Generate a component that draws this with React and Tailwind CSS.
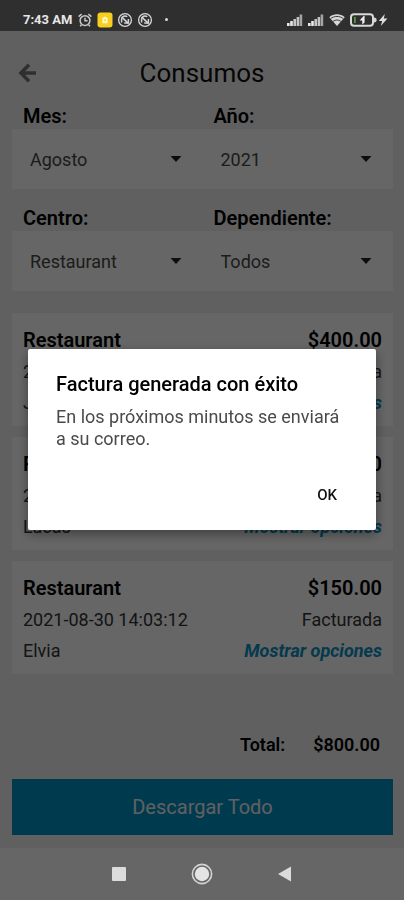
const FILTERS = [
  [
    { id: 'mes', label: 'Mes:', value: 'Agosto' },
    { id: 'anio', label: 'Año:', value: '2021' },
  ],
  [
    { id: 'centro', label: 'Centro:', value: 'Restaurant' },
    { id: 'dependiente', label: 'Dependiente:', value: 'Todos' },
  ],
]

const CONSUMOS = [
  { id: 1, centro: 'Restaurant', monto: '$400.00', fecha: '2021-08-30 14:03:12', estado: 'Facturada', nombre: 'Juan' },
  { id: 2, centro: 'Restaurant', monto: '$250.00', fecha: '2021-08-30 14:03:12', estado: 'Facturada', nombre: 'Lucas' },
  { id: 3, centro: 'Restaurant', monto: '$150.00', fecha: '2021-08-30 14:03:12', estado: 'Facturada', nombre: 'Elvia' },
]

function MutedIcon() {
  return (
    <svg className="h-4 w-4" viewBox="0 0 16 16" fill="none" stroke="#d6d6d6">
      <circle cx="8" cy="8" r="6.4" strokeWidth="1.3" />
      <path d="M4.6 10.4V7.2a3.4 3.4 0 0 1 5.6-2.4M11.4 7v4H7.2" strokeWidth="1.5" />
      <path d="M4.6 5l6.8 6.4" strokeWidth="1.6" />
    </svg>
  )
}

function SignalIcon() {
  return (
    <svg className="h-3 w-4" viewBox="0 0 16 12" fill="#c4c4c4">
      <rect x="0" y="9" width="2.6" height="3" fill="#e8e8e8" />
      <rect x="3.2" y="7" width="2.6" height="5" fill="#e8e8e8" />
      <rect x="6.4" y="5" width="2.6" height="7" />
      <rect x="9.6" y="3" width="2.6" height="9" />
      <rect x="12.6" y="0.5" width="2.6" height="11.5" fill="#a4a4a4" />
    </svg>
  )
}

function StatusBar() {
  return (
    <div className="relative z-20 flex h-[31px] items-center justify-between bg-[#2f2f2f] pt-2 pr-4 pl-[23px] text-[#e6e6e6]">
      <div className="flex items-center gap-1">
        <span className="mr-px text-[13px] font-bold">7:43 AM</span>
        <svg className="h-4 w-4" viewBox="0 0 16 16" fill="none" stroke="#c8c8c8" strokeWidth="1.5">
          <circle cx="8" cy="8.6" r="4.9" />
          <path d="M8 5.8v3h2.6M1.6 4.6l3-2.5M14.4 4.6l-3-2.5M4.4 12.8l-1.3 1.5M11.6 12.8l1.3 1.5" />
        </svg>
        <svg className="h-4 w-4" viewBox="0 0 16 16">
          <rect x="0.5" y="0.5" width="15" height="15" rx="3" fill="#f8cf1c" />
          <path d="M8 4.2l1 1.3h1.6v5.7H5.4V5.5H7z" fill="#fff8d0" />
          <path d="M8 7v2.4" stroke="#f8cf1c" strokeWidth="1.2" />
        </svg>
        <MutedIcon />
        <MutedIcon />
        <span className="ml-2 h-[3px] w-[3px] rounded-full bg-[#dcdcdc]" />
      </div>
      <div className="flex items-center gap-[5px]">
        <SignalIcon />
        <SignalIcon />
        <svg className="h-3 w-4" viewBox="0 0 16 12">
          <path d="M8 12L0.3 3.2C4.6-.6 11.4-.6 15.7 3.2z" fill="#d8d8d8" />
          <path d="M1.6 4.7c3.7-3 9.1-3 12.8 0M4 7.4c2.3-1.9 5.7-1.9 8 0" fill="none" stroke="#2f2f2f" strokeWidth="0.9" />
        </svg>
        <svg className="h-[14px] w-[27px]" viewBox="0 0 27 14">
          <rect x="1" y="1.2" width="22" height="11.6" rx="3" fill="none" stroke="#d8d8d8" strokeWidth="2" />
          <path d="M24 4.5c2 .3 2.6 1.2 2.6 2.5s-.6 2.2-2.6 2.5z" fill="#d8d8d8" />
          <rect x="4" y="4" width="1.8" height="6" fill="#4c9a3e" />
          <path d="M13.8 2.8L9.6 7.6h2.6v3.8l2.4-2V2.8z" fill="#ededed" />
        </svg>
        <svg className="-ml-1 h-3 w-[10px]" viewBox="0 0 10 12">
          <path d="M6.8 0L0.8 7h3.4L2.8 12 9.4 4.6H5.8z" fill="#dedede" />
        </svg>
      </div>
    </div>
  )
}

function FilterRow({ filters }) {
  return (
    <div>
      <div className="grid grid-cols-2">
        {filters.map((f) => (
          <label key={f.id} htmlFor={f.id} className="pl-[11px] text-[20px] leading-[26px] font-semibold text-black">
            {f.label}
          </label>
        ))}
      </div>
      <div className="grid grid-cols-2 bg-white">
        {filters.map((f) => (
          <div key={f.id} className="relative">
            <select
              id={f.id}
              defaultValue={f.value}
              className="h-[60px] w-full appearance-none bg-transparent pr-10 pl-[18px] text-[18px] text-[#484848]"
            >
              <option>{f.value}</option>
            </select>
            <svg className="pointer-events-none absolute top-[27px] right-[21px] h-[6px] w-3" viewBox="0 0 12 6">
              <path d="M0.5 0h11L6 6z" fill="#222" />
            </svg>
          </div>
        ))}
      </div>
    </div>
  )
}

function ConsumoCard({ consumo }) {
  return (
    <div className="bg-white px-[11px] pt-3 pb-2 text-[18px] leading-[31px] text-[#333]">
      <div className="flex justify-between text-[20px] font-semibold text-black">
        <span>{consumo.centro}</span>
        <span>{consumo.monto}</span>
      </div>
      <div className="flex justify-between">
        <span>{consumo.fecha}</span>
        <span>{consumo.estado}</span>
      </div>
      <div className="flex justify-between">
        <span>{consumo.nombre}</span>
        <button type="button" className="font-bold text-[#0a8fc4] italic">
          Mostrar opciones
        </button>
      </div>
    </div>
  )
}

function NavBar() {
  return (
    <nav className="relative z-20 flex h-[52px] items-center justify-center gap-[61px] bg-[#666]">
      <button type="button" aria-label="Recientes">
        <svg className="h-[22px] w-[22px]" viewBox="0 0 22 22">
          <rect x="4" y="4" width="14" height="14" rx="1" fill="#dcdcdc" />
        </svg>
      </button>
      <button type="button" aria-label="Inicio">
        <svg className="h-[22px] w-[22px]" viewBox="0 0 22 22">
          <circle cx="11" cy="11" r="9.6" fill="none" stroke="#d4d4d4" strokeWidth="1.6" />
          <circle cx="11" cy="11" r="7.2" fill="#e4e4e4" />
        </svg>
      </button>
      <button type="button" aria-label="Atrás">
        <svg className="h-[22px] w-[22px]" viewBox="0 0 22 22">
          <path d="M4 11L17 3.5v15z" fill="#dcdcdc" />
        </svg>
      </button>
    </nav>
  )
}

function Dialog() {
  return (
    <div className="fixed inset-0 z-10 flex items-center justify-center bg-black/60 px-7 pb-[22px]">
      <div
        role="alertdialog"
        aria-labelledby="dialog-title"
        className="w-full rounded-xs bg-white px-7 pt-[21px] pb-4 shadow-[0_4px_12px_rgba(0,0,0,0.4)]"
      >
        <h2 id="dialog-title" className="text-[20px] leading-7 font-medium text-black">
          Factura generada con éxito
        </h2>
        <p className="mt-2 text-[18px] leading-[22px] text-[#4a4a4a]">
          En los próximos minutos se enviará a su correo.
        </p>
        <div className="mt-7 flex justify-end">
          <button type="button" className="h-9 px-[11px] text-[15px] font-medium text-[#111]">
            OK
          </button>
        </div>
      </div>
    </div>
  )
}

export default function App() {
  return (
    <div className="flex min-h-screen flex-col bg-[#f0f0f0] font-[Roboto,sans-serif]">
      <StatusBar />
      <header className="grid h-[72px] grid-cols-[1fr_auto_1fr] items-center px-[18px] pt-3">
        <button type="button" aria-label="Volver" className="justify-self-start">
          <svg className="h-5 w-[19px]" viewBox="0 0 19 20" fill="none" stroke="#777" strokeWidth="3.6">
            <path d="M11 1.8L3 10l8 8.2M3 10h15" />
          </svg>
        </button>
        <h1 className="text-[26px] leading-8 text-[#111]">Consumos</h1>
      </header>
      <main className="flex flex-1 flex-col pr-[11px] pl-3">
        <div className="flex flex-col gap-4">
          {FILTERS.map((row) => (
            <FilterRow key={row[0].id} filters={row} />
          ))}
        </div>
        <div className="mt-[22px] flex flex-col gap-[11px]">
          {CONSUMOS.map((c) => (
            <ConsumoCard key={c.id} consumo={c} />
          ))}
        </div>
        <div className="mt-auto pb-[13px]">
          <div className="flex justify-end gap-7 pr-[13px] pb-5 text-[18px] leading-7 font-semibold text-black">
            <span>Total:</span>
            <span>$800.00</span>
          </div>
          <button type="button" className="h-14 w-full bg-[#0091c6] text-[20px] text-[#f0f0f0]">
            Descargar Todo
          </button>
        </div>
      </main>
      <NavBar />
      <Dialog />
    </div>
  )
}
